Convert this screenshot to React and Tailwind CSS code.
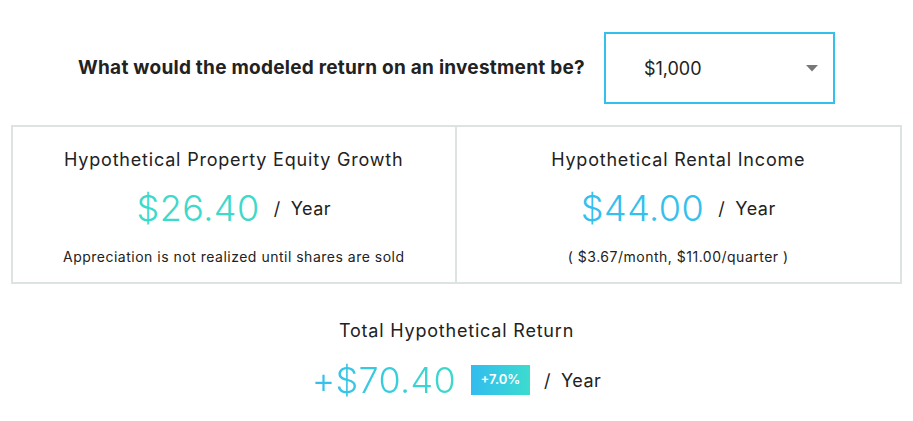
import { useState } from 'react';

const font = { fontFamily: 'Inter, "Noto Sans", sans-serif' };

function Per() {
  return (
    <span className="ml-[14px] text-[18px] text-[#222] tracking-[0.5px]">
      /<span className="ml-[10px]">Year</span>
    </span>
  );
}

export default function App() {
  const [amount] = useState('$1,000');

  return (
    <div className="w-[913px] h-[421px] bg-white text-[#222]" style={font}>
      {/* Question + select */}
      <div className="flex items-center justify-center gap-[19px] pt-[32px]">
        <h2 className="text-[19px] font-bold tracking-[0.25px]">
          What would the modeled return on an investment be?
        </h2>
        <div className="w-[231px] h-[72px] border-2 border-[#35bfed] flex items-center justify-between pl-[38px] pr-[15px]">
          <span className="text-[18px] text-[#222]">{amount}</span>
          <svg width="12" height="7" viewBox="0 0 12 7">
            <path d="M0 0 H12 L6 6.5 Z" fill="#777" />
          </svg>
        </div>
      </div>

      {/* Cards */}
      <div className="mx-[11px] mt-[21px] h-[159px] border-2 border-[#dde3e3] grid grid-cols-2">
        <div className="border-r-2 border-[#dde3e3] flex flex-col items-center pt-[19px]">
          <h3 className="text-[18px] tracking-[0.8px]">Hypothetical Property Equity Growth</h3>
          <div className="flex items-center mt-[8px]">
            <span className="text-[36px] font-light text-[#3dd9c9] tracking-[0.5px]">$26.40</span>
            <Per />
          </div>
          <p className="mt-[11px] text-[14px] tracking-[0.5px]">Appreciation is not realized until shares are sold</p>
        </div>
        <div className="flex flex-col items-center pt-[19px]">
          <h3 className="text-[18px] tracking-[0.8px]">Hypothetical Rental Income</h3>
          <div className="flex items-center mt-[8px]">
            <span className="text-[36px] font-light text-[#35bfed] tracking-[0.5px]">$44.00</span>
            <Per />
          </div>
          <p className="mt-[11px] text-[14px] tracking-[0.5px]">( $3.67/month, $11.00/quarter )</p>
        </div>
      </div>

      {/* Total */}
      <div className="flex flex-col items-center mt-[33px]">
        <h3 className="text-[18px] tracking-[0.8px]">Total Hypothetical Return</h3>
        <div className="flex items-center mt-[9px]">
          <span className="text-[36px] font-light tracking-[0.3px] bg-gradient-to-r from-[#35bfed] to-[#3dd9c9] bg-clip-text text-transparent">
            +$70.40
          </span>
          <span className="ml-[15px] w-[59px] h-[30px] flex items-center justify-center text-[13px] font-semibold text-white bg-gradient-to-r from-[#33bcee] to-[#3ddbcf]">
            +7.0%
          </span>
          <Per />
        </div>
      </div>
    </div>
  );
}
